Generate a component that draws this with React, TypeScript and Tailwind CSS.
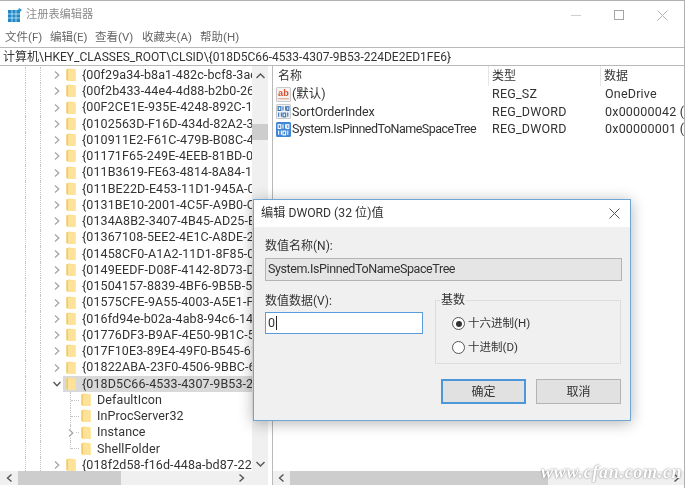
import React from "react";

const FONT = "font-['Roboto','Noto_Sans_CJK_SC',sans-serif]";

function Folder() {
  return (
    <svg width="10" height="14" viewBox="0 0 10 14" className="shrink-0">
      <path d="M0.5 1.5 L3 0.5 L9.5 1.5 L9.5 13 L1.5 13 L0.5 12 Z" fill="#fbd87f" />
      <path d="M0.5 1.5 L2 1 L2 12 L0.5 12 Z" fill="#f3c762" />
      <rect x="2" y="1.5" width="7.5" height="11.5" fill="#fde39a" />
    </svg>
  );
}

function Chevron({ open = false }: { open?: boolean }) {
  return (
    <svg width="8" height="8" viewBox="0 0 8 8" className="shrink-0">
      {open ? (
        <path d="M0.5 2 L4 5.8 L7.5 2" fill="none" stroke="#555" strokeWidth="1.3" />
      ) : (
        <path d="M2 0.5 L5.8 4 L2 7.5" fill="none" stroke="#a6a6a6" strokeWidth="1.3" />
      )}
    </svg>
  );
}

const before = [
  "{00f29a34-b8a1-482c-bcf8-3ac7b0fe8f62}",
  "{00f2b433-44e4-4d88-b2b0-2698a0a91dba}",
  "{00F2CE1E-935E-4248-892C-130F32C45CB4}",
  "{0102563D-F16D-434d-82A2-3C4C4FAEB1B1}",
  "{010911E2-F61C-479B-B08C-43E6D1299EFE}",
  "{01171F65-249E-4EEB-81BD-0D3A8E1A24BB}",
  "{011B3619-FE63-4814-8A84-15A194CE9CE3}",
  "{011BE22D-E453-11D1-945A-00C04FB984F9}",
  "{0131BE10-2001-4C5F-A9B0-CC88FAB64CE8}",
  "{0134A8B2-3407-4B45-AD25-E9F7C92A80BC}",
  "{01367108-5EE2-4E1C-A8DE-2A6A1FEC2F1B}",
  "{01458CF0-A1A2-11D1-8F85-00600895E7D5}",
  "{0149EEDF-D08F-4142-8D73-D23903D21E90}",
  "{01504157-8839-4BF6-9B5B-5A7E2D1C0F3A}",
  "{01575CFE-9A55-4003-A5E1-F38D1EBDCBE1}",
  "{016fd94e-b02a-4ab8-94c6-14a1c2f0a6cd}",
  "{01776DF3-B9AF-4E50-9B1C-56E93116D704}",
  "{017F10E3-89E4-49F0-B545-618DE31FD27C}",
  "{01822ABA-23F0-4506-9BBC-680F5D6D606C}",
];

function TopRow({ text, open, selected }: { text: string; open?: boolean; selected?: boolean }) {
  return (
    <div className="flex h-[16.25px] items-center">
      <div className="h-full w-[26px] shrink-0 border-r border-dotted border-[#c4c4c4]" />
      <div className="h-full w-[15px] shrink-0 border-r border-dotted border-[#c4c4c4]" />
      <div className="ml-[12px] mr-[2px] flex w-[8px] shrink-0">
        <Chevron open={open} />
      </div>
      <div className={`flex h-full min-w-0 flex-1 items-center pl-[3px] ${selected ? "bg-[#d9d9d9]" : ""}`}>
        <Folder />
        <span className="ml-[6px] whitespace-nowrap text-[12.5px] leading-none tracking-[0.1px] text-[#333]">{text}</span>
      </div>
    </div>
  );
}

function ChildRow({ text, chevron, last }: { text: string; chevron?: boolean; last?: boolean }) {
  return (
    <div className="flex h-[16.25px] items-center">
      <div className="h-full w-[26px] shrink-0 border-r border-dotted border-[#c4c4c4]" />
      <div className="h-full w-[15px] shrink-0 border-r border-dotted border-[#c4c4c4]" />
      <div className="relative ml-[29px] flex h-full w-[11px] shrink-0 items-center">
        <div className={`w-0 border-l border-dotted border-[#c4c4c4] ${last ? "h-1/2 self-start" : "h-full"}`} />
        <div className="w-[8px] border-t border-dotted border-[#c4c4c4]" />
        {chevron && (
          <div className="absolute left-[-3px] top-[4px] bg-white">
            <Chevron />
          </div>
        )}
      </div>
      <Folder />
      <span className="ml-[6px] whitespace-nowrap text-[12.5px] leading-none tracking-[0.1px] text-[#333]">{text}</span>
    </div>
  );
}

function AbIcon() {
  return (
    <svg width="15" height="15" viewBox="0 0 14 14" className="shrink-0">
      <rect x="0.5" y="0.5" width="13" height="13" rx="1" fill="#f3f3f3" stroke="#c9c9c9" />
      <text x="7" y="8.5" textAnchor="middle" fontSize="8.5" fontWeight="700" fill="#d4502f" fontFamily="Liberation Sans, sans-serif">ab</text>
      <path d="M2 11 H12" stroke="#e09b7d" strokeWidth="1" />
    </svg>
  );
}

function BinIcon({ active }: { active?: boolean }) {
  const bg = active ? "#3f87d4" : "#f3f3f3";
  const fg = active ? "#ffffff" : "#2f6fb8";
  return (
    <svg width="15" height="15" viewBox="0 0 14 14" className="shrink-0">
      <rect x="0.5" y="0.5" width="13" height="13" rx="1" fill={bg} stroke={active ? "#3f87d4" : "#c9c9c9"} />
      <rect x="2" y="2.5" width="2.5" height="3.5" fill="none" stroke={fg} />
      <path d="M6.5 2 V6 M9 2 V6" stroke={fg} />
      <rect x="10" y="2.5" width="2" height="3.5" fill="none" stroke={fg} />
      <path d="M2.5 8 V12 M5 8 V12" stroke={fg} />
      <rect x="6.5" y="8.5" width="2.5" height="3.5" fill="none" stroke={fg} />
      <path d="M11 8 V12" stroke={fg} />
    </svg>
  );
}

function ValueRow({ icon, name, nameClass, type, data }: { icon: React.ReactNode; name: string; nameClass: string; type: string; data: string }) {
  return (
    <div className="flex h-[17.3px] items-center text-[12.5px] leading-none tracking-[0.2px] text-[#333]">
      <div className="flex w-[219px] shrink-0 items-center gap-[1px] pl-[3px]">
        {icon}
        <span className={`whitespace-nowrap ${nameClass}`}>{name}</span>
      </div>
      <div className="w-[113px] shrink-0 whitespace-nowrap">{type}</div>
      <div className="whitespace-nowrap">{data}</div>
    </div>
  );
}

function ArrowH({ right }: { right?: boolean }) {
  return (
    <svg width="7" height="8" viewBox="0 0 7 8" className="shrink-0">
      <path d={right ? "M1.5 0.5 L5.5 4 L1.5 7.5" : "M5.5 0.5 L1.5 4 L5.5 7.5"} fill="none" stroke="#555" strokeWidth="1.4" />
    </svg>
  );
}

function Radio({ checked }: { checked?: boolean }) {
  return (
    <div className="flex h-[13px] w-[13px] shrink-0 items-center justify-center rounded-full border border-[#555] bg-white">
      {checked && <div className="h-[6px] w-[6px] rounded-full bg-[#333]" />}
    </div>
  );
}

function Dialog() {
  return (
    <div className="absolute left-[253px] top-[199px] flex h-[222px] w-[378px] flex-col border border-[#6fa6d8] bg-[#f0f0f0] text-[12px] leading-none text-[#333] shadow-[0_2px_14px_rgba(0,0,0,0.3)]">
      <div className="flex h-[27px] shrink-0 items-center justify-between bg-white pl-[7px] pr-[10px]">
        <span className="text-[12.2px]">编辑 DWORD (32 位)值</span>
        <svg width="11" height="11" viewBox="0 0 11 11">
          <path d="M0.5 0.5 L10.5 10.5 M10.5 0.5 L0.5 10.5" stroke="#555" strokeWidth="1" />
        </svg>
      </div>
      <div className="flex flex-1 flex-col pl-[11px] pr-[8px]">
        <div className="mt-[13px] h-[12px]">数值名称(N):</div>
        <div className="mt-[6px] flex h-[23px] w-[357px] items-center border border-[#b4b4b4] bg-[#e5e5e5] pl-[2px] text-[12.5px] tracking-[-0.4px]">
          System.IsPinnedToNameSpaceTree
        </div>
        <div className="mt-[12px] flex">
          <div className="w-[170px] shrink-0">
            <div className="mt-[2px] h-[12px]">数值数据(V):</div>
            <div className="mt-[5px] flex h-[22px] w-[158px] items-center border border-[#5a9bdc] bg-white pl-[2px] text-[12.5px]">
              0<span className="ml-[1px] h-[14px] w-px bg-[#222]" />
            </div>
          </div>
          <div className="relative mt-[7px] flex h-[64px] w-[186px] flex-col gap-[11px] border border-[#dcdcdc] pl-[16px] pt-[16px]">
            <span className="absolute left-[4px] top-[-7px] bg-[#f0f0f0] px-px">基数</span>
            <div className="flex items-center gap-[3px]">
              <Radio checked />
              <span className="text-[11.5px]">十六进制(H)</span>
            </div>
            <div className="flex items-center gap-[3px]">
              <Radio />
              <span className="text-[11.5px]">十进制(D)</span>
            </div>
          </div>
        </div>
        <div className="mt-[15px] flex justify-end gap-[10px] pr-[1px]">
          <div className="flex h-[25px] w-[85px] items-center justify-center border-2 border-[#4b97d8] bg-[#e1e1e1]">确定</div>
          <div className="flex h-[25px] w-[85px] items-center justify-center border border-[#b4b4b4] bg-[#e1e1e1]">取消</div>
        </div>
      </div>
    </div>
  );
}

export default function App() {
  return (
    <div className={`relative h-[488px] w-[685px] overflow-hidden bg-white blur-[0.4px] ${FONT}`}>
      <div className="flex h-full w-full flex-col border-r border-t border-[#b0b0b0]">
        <div className="flex h-[28px] shrink-0 items-center justify-between pl-[8px] pr-[16px]">
          <div className="flex items-center gap-[4px]">
            <svg width="14" height="14" viewBox="0 0 14 14">
              <rect x="0" y="2" width="12" height="12" fill="#1e88c9" />
              <path d="M4 2 V14 M8 2 V14 M0 6 H12 M0 10 H12" stroke="#cfe8f6" strokeWidth="0.8" />
              <path d="M11 0 L14 2 L12 4 L10 2 Z" fill="#2a9ad6" />
            </svg>
            <span className="text-[11.2px] text-[#8a8a8a]">注册表编辑器</span>
          </div>
          <div className="flex items-center gap-[33px]">
            <div className="h-px w-[10px] bg-[#cfcfcf]" />
            <div className="h-[10px] w-[10px] border border-[#a5a5a5]" />
            <svg width="11" height="11" viewBox="0 0 11 11">
              <path d="M0.5 0.5 L10.5 10.5 M10.5 0.5 L0.5 10.5" stroke="#b5b5b5" strokeWidth="1" />
            </svg>
          </div>
        </div>
        <div className="flex h-[18px] shrink-0 items-center gap-[5px] pl-[5px] text-[11.5px] text-[#666]">
          <span className="w-[40px] whitespace-nowrap">文件(F)</span>
          <span className="w-[40px] whitespace-nowrap">编辑(E)</span>
          <span className="w-[42px] whitespace-nowrap">查看(V)</span>
          <span className="w-[53px] whitespace-nowrap">收藏夹(A)</span>
          <span className="whitespace-nowrap">帮助(H)</span>
        </div>
        <div className="flex h-[19px] shrink-0 items-center border-y border-[#b9b9b9] pl-[3px] text-[12px] leading-none text-[#333]">
          计算机\HKEY_CLASSES_ROOT\CLSID\{"{018D5C66-4533-4307-9B53-224DE2ED1FE6}"}
        </div>
        <div className="flex min-h-0 flex-1">
          <div className="flex w-[268px] shrink-0 flex-col">
            <div className="flex min-h-0 flex-1">
              <div className="w-[252px] shrink-0 overflow-hidden pt-[1px]">
                {before.map((t) => (
                  <TopRow key={t} text={t} />
                ))}
                <TopRow text="{018D5C66-4533-4307-9B53-224DE2ED1FE6}" open selected />
                <ChildRow text="DefaultIcon" />
                <ChildRow text="InProcServer32" />
                <ChildRow text="Instance" chevron />
                <ChildRow text="ShellFolder" last />
                <TopRow text="{018f2d58-f16d-448a-bd87-225cdc1b4a2f}" />
              </div>
              <div className="flex w-[16px] shrink-0 flex-col items-center bg-[#f0f0f0]">
                <svg width="9" height="6" viewBox="0 0 9 6" className="mt-[7px] shrink-0">
                  <path d="M0.5 5 L4.5 1 L8.5 5" fill="none" stroke="#555" strokeWidth="1.4" />
                </svg>
                <div className="mt-[45px] h-[16px] w-full shrink-0 bg-[#cdcdcd]" />
                <div className="flex-1" />
                <svg width="9" height="6" viewBox="0 0 9 6" className="mb-[4px] shrink-0">
                  <path d="M0.5 1 L4.5 5 L8.5 1" fill="none" stroke="#555" strokeWidth="1.4" />
                </svg>
              </div>
            </div>
            <div className="flex h-[14px] shrink-0 items-center bg-[#f0f0f0]">
              <div className="flex w-[18px] shrink-0 justify-center"><ArrowH /></div>
              <div className="h-full w-[103px] shrink-0 bg-[#cdcdcd]" />
              <div className="flex-1" />
              <div className="mr-[23px]"><ArrowH right /></div>
            </div>
          </div>
          <div className="ml-[4px] flex min-w-0 flex-1 flex-col border-l border-[#b9b9b9]">
            <div className="flex h-[20px] shrink-0 items-center text-[12px] leading-none text-[#333]">
              <div className="h-full w-[216px] shrink-0 border-r border-[#e5e5e5] pl-[5px] pt-[4px]">名称</div>
              <div className="h-full w-[112px] shrink-0 border-r border-[#e5e5e5] pl-[3px] pt-[4px]">类型</div>
              <div className="h-full pl-[3px] pt-[4px]">数据</div>
            </div>
            <ValueRow icon={<AbIcon />} name="(默认)" nameClass="tracking-[0px]" type="REG_SZ" data="OneDrive" />
            <ValueRow icon={<BinIcon />} name="SortOrderIndex" nameClass="tracking-[-0.1px]" type="REG_DWORD" data="0x00000042 (66)" />
            <ValueRow icon={<BinIcon active />} name="System.IsPinnedToNameSpaceTree" nameClass="tracking-[-0.5px]" type="REG_DWORD" data="0x00000001 (1)" />
            <div className="flex-1" />
            <div className="flex h-[14px] shrink-0 items-center bg-[#f0f0f0]">
              <div className="flex w-[17px] shrink-0 justify-center"><ArrowH /></div>
              <div className="h-full w-[258px] shrink-0 bg-[#cdcdcd]" />
              <div className="flex-1" />
              <div className="mr-[4px]"><ArrowH right /></div>
            </div>
          </div>
        </div>
        <div className="h-[3px] shrink-0 bg-white" />
      </div>
      <Dialog />
      <div className="absolute left-[541px] top-[463px] font-['Liberation_Serif',serif] text-[18px] font-bold italic leading-none tracking-[0.7px] text-white [text-shadow:0_0_2px_#666]">
        www.cfan.com.cn
      </div>
    </div>
  );
}
